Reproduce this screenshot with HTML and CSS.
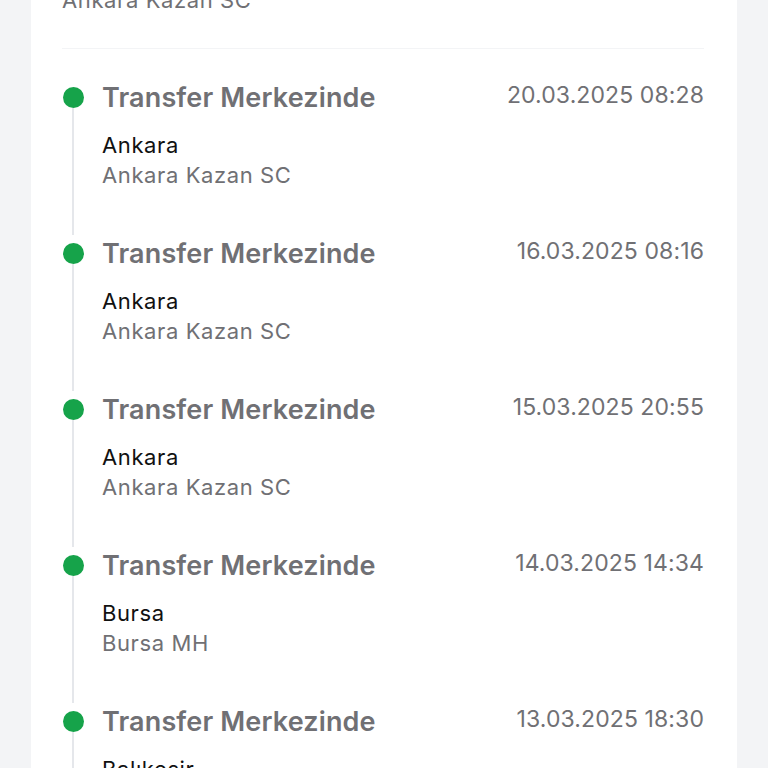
FILE: index.html
```html
<!DOCTYPE html>
<html>
<head>
  <title>Gönderi Takibi</title>
  <link rel="stylesheet" href="styles.css">
</head>
<body>
  <div class="page">
    <div class="card">
      <div class="summary">
        <div class="sub">Ankara Kazan SC</div>
      </div>
      <div class="timeline">
        <div class="event">
          <div class="marker"><span class="dot"></span><span class="line"></span></div>
          <div class="info">
            <div class="head">
              <div class="title">Transfer Merkezinde</div>
              <div class="date">20.03.2025 08:28</div>
            </div>
            <div class="city">Ankara</div>
            <div class="sub">Ankara Kazan SC</div>
          </div>
        </div>
        <div class="event">
          <div class="marker"><span class="dot"></span><span class="line"></span></div>
          <div class="info">
            <div class="head">
              <div class="title">Transfer Merkezinde</div>
              <div class="date">16.03.2025 08:16</div>
            </div>
            <div class="city">Ankara</div>
            <div class="sub">Ankara Kazan SC</div>
          </div>
        </div>
        <div class="event">
          <div class="marker"><span class="dot"></span><span class="line"></span></div>
          <div class="info">
            <div class="head">
              <div class="title">Transfer Merkezinde</div>
              <div class="date">15.03.2025 20:55</div>
            </div>
            <div class="city">Ankara</div>
            <div class="sub">Ankara Kazan SC</div>
          </div>
        </div>
        <div class="event">
          <div class="marker"><span class="dot"></span><span class="line"></span></div>
          <div class="info">
            <div class="head">
              <div class="title">Transfer Merkezinde</div>
              <div class="date">14.03.2025 14:34</div>
            </div>
            <div class="city">Bursa</div>
            <div class="sub">Bursa MH</div>
          </div>
        </div>
        <div class="event">
          <div class="marker"><span class="dot"></span><span class="line"></span></div>
          <div class="info">
            <div class="head">
              <div class="title">Transfer Merkezinde</div>
              <div class="date">13.03.2025 18:30</div>
            </div>
            <div class="city">Balıkesir</div>
            <div class="sub">Balıkesir TM</div>
          </div>
        </div>
      </div>
    </div>
  </div>
</body>
</html>
```

FILE: styles.css
```css
body {
  margin: 0;
  background-color: #f3f4f6;
  font-family: Inter, "Noto Sans", sans-serif;
  overflow: hidden;
}

.page {
  padding: 0 31px;
  margin-top: -15px;
}

.card {
  background-color: #ffffff;
  padding: 0 33px 0 31px;
}

.summary {
  padding-bottom: 33px;
  border-bottom: 1px solid #f3f4f6;
  margin-bottom: 30px;
}

.event {
  display: flex;
  gap: 18px;
}

.marker {
  width: 22px;
  display: flex;
  flex-direction: column;
  align-items: center;
  flex-shrink: 0;
}

.dot {
  width: 21px;
  height: 21px;
  border-radius: 50%;
  background-color: #16a34a;
  margin-top: 8px;
  flex-shrink: 0;
}

.line {
  width: 2px;
  flex: 1;
  background-color: #e5e7eb;
}

.info {
  flex: 1;
  padding-bottom: 45px;
}

.head {
  display: flex;
  justify-content: space-between;
  align-items: flex-start;
  margin-bottom: 15px;
}

.title {
  font-size: 27px;
  line-height: 34px;
  font-weight: 600;
  letter-spacing: 0.15px;
  color: #707074;
  padding-top: 2px;
}

.date {
  font-size: 23px;
  line-height: 30px;
  letter-spacing: 0.1px;
  color: #707074;
  padding-top: 1px;
}

.city {
  font-size: 22px;
  line-height: 30px;
  letter-spacing: 0.6px;
  color: #111111;
}

.sub {
  font-size: 22px;
  line-height: 30px;
  letter-spacing: 0.6px;
  color: #707074;
}
```
